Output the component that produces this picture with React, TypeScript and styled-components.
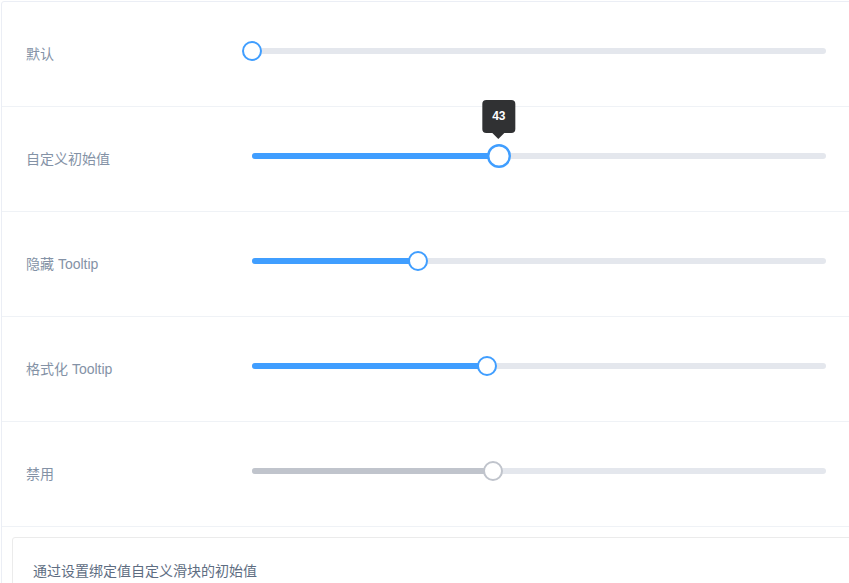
import React from "react";
import styled, { createGlobalStyle } from "styled-components";

const Global = createGlobalStyle`
  html, body { margin: 0; padding: 0; background: #fff; overflow: hidden; }
  body { font-family: "Liberation Sans", "Noto Sans CJK SC", sans-serif; }
`;

const Page = styled.div`
  width: 900px;
  padding: 1px 0 0 1px;
`;

const DemoBlock = styled.div`
  width: 870px;
  border: 1px solid #ebeef5;
  border-radius: 3px;
`;

const Row = styled.div`
  display: flex;
  align-items: flex-start;
  padding: 30px 24px;
  border-bottom: 1px solid #eff2f6;
`;

const Label = styled.span`
  width: 226px;
  font-size: 14px;
  line-height: 44px;
  color: #8492a6;
`;

const Slider = styled.div`
  width: 574px;
  height: 44px;
  padding-top: 16px;
  box-sizing: border-box;
`;

const Runway = styled.div`
  position: relative;
  width: 100%;
  height: 6px;
  border-radius: 3px;
  background: #e4e7ed;
`;

const Bar = styled.div<{ $disabled?: boolean }>`
  position: absolute;
  left: 0;
  top: 0;
  height: 6px;
  border-radius: 3px;
  background: ${(p) => (p.$disabled ? "#c0c4cc" : "#409eff")};
`;

const Thumb = styled.div<{ $disabled?: boolean; $hover?: boolean }>`
  position: absolute;
  top: 3px;
  width: 16px;
  height: 16px;
  border: 2px solid ${(p) => (p.$disabled ? "#c0c4cc" : "#409eff")};
  background: #fff;
  border-radius: 50%;
  transform: translate(-50%, -50%) ${(p) => (p.$hover ? "scale(1.2)" : "")};
`;

const Tip = styled.div`
  position: absolute;
  top: -53px;
  transform: translateX(-50%);
  background: #303133;
  color: #fff;
  font-size: 12px;
  font-weight: bold;
  line-height: 13px;
  padding: 10px;
  border-radius: 4px;
  &::after {
    content: "";
    position: absolute;
    left: 50%;
    bottom: -6px;
    margin-left: -6px;
    border-left: 6px solid transparent;
    border-right: 6px solid transparent;
    border-top: 6px solid #303133;
  }
`;

const Meta = styled.div`
  margin: 10px;
  padding: 22px 20px 20px;
  border: 1px solid #ebebeb;
  border-radius: 3px;
  font-size: 14px;
  line-height: 22px;
  color: #5e6d82;
  height: 80px;
`;

type Item = { label: string; value: number; disabled?: boolean; tip?: boolean };

const items: Item[] = [
  { label: "默认", value: 0 },
  { label: "自定义初始值", value: 43, tip: true },
  { label: "隐藏 Tooltip", value: 29 },
  { label: "格式化 Tooltip", value: 41 },
  { label: "禁用", value: 42, disabled: true },
];

export default function App() {
  return (
    <Page>
      <Global />
      <DemoBlock>
        {items.map((it) => (
          <Row key={it.label}>
            <Label>{it.label}</Label>
            <Slider>
              <Runway>
                <Bar $disabled={it.disabled} style={{ width: `${it.value}%` }} />
                {it.tip && <Tip style={{ left: `${it.value}%` }}>{it.value}</Tip>}
                <Thumb
                  $disabled={it.disabled}
                  $hover={it.tip}
                  style={{ left: `${it.value}%` }}
                />
              </Runway>
            </Slider>
          </Row>
        ))}
        <Meta>通过设置绑定值自定义滑块的初始值</Meta>
      </DemoBlock>
    </Page>
  );
}
